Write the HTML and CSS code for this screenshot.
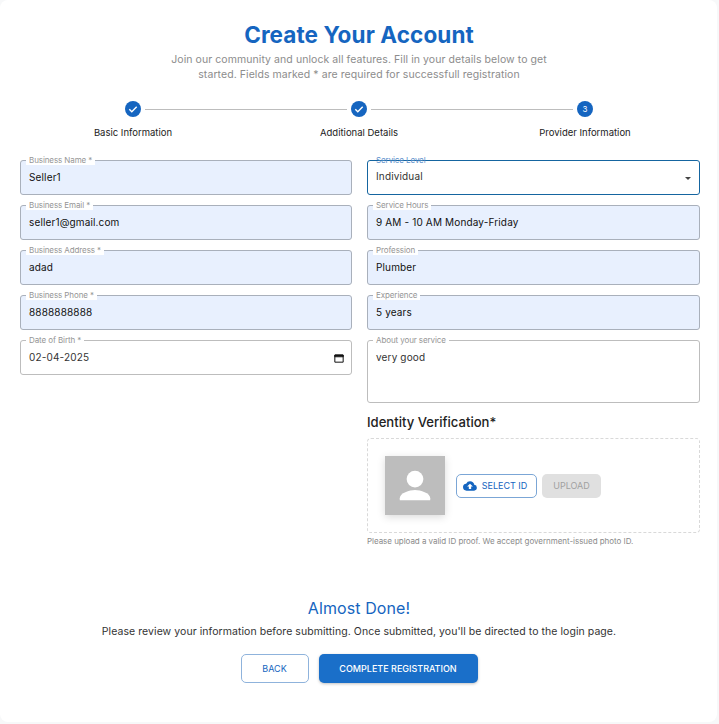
FILE: index.html
```html
<!DOCTYPE html>
<html lang="en">
<head>
    <meta charset="UTF-8">
    <meta name="viewport" content="width=device-width, initial-scale=1.0">
    <title>Create Your Account</title>
    <link rel="stylesheet" href="styles.css">
</head>
<body>
    <div class="card">
        <h1 class="title">Create Your Account</h1>
        <p class="subtitle">Join our community and unlock all features. Fill in your details below to get<br>started. Fields marked * are required for successfull registration</p>

        <div class="stepper">
            <div class="step">
                <div class="step-circle">
                    <svg viewBox="0 0 16 16" width="16" height="16"><path d="M4.3 8.2l2.5 2.5 4.9-5" fill="none" stroke="#fff" stroke-width="1.4"/></svg>
                </div>
                <div class="step-label">Basic Information</div>
            </div>
            <div class="step">
                <div class="step-circle">
                    <svg viewBox="0 0 16 16" width="16" height="16"><path d="M4.3 8.2l2.5 2.5 4.9-5" fill="none" stroke="#fff" stroke-width="1.4"/></svg>
                </div>
                <div class="step-label">Additional Details</div>
            </div>
            <div class="step">
                <div class="step-circle">3</div>
                <div class="step-label">Provider Information</div>
            </div>
        </div>

        <div class="form-grid">
            <div class="form-col">
                <div class="field filled"><span class="field-label">Business Name *</span><div class="field-value">Seller1</div></div>
                <div class="field filled"><span class="field-label">Business Email *</span><div class="field-value">seller1@gmail.com</div></div>
                <div class="field filled"><span class="field-label">Business Address *</span><div class="field-value">adad</div></div>
                <div class="field filled"><span class="field-label">Business Phone *</span><div class="field-value">8888888888</div></div>
                <div class="field"><span class="field-label">Date of Birth *</span>
                    <div class="field-value date-value">02-04-2025
                        <svg viewBox="0 0 12 12" width="10" height="10"><path d="M1 2.5h10v8.5H1z M1 2.5v2h10v-2" fill="none" stroke="#111" stroke-width="1.2"/><path d="M1 1.8h10v2.4H1z" fill="#111"/></svg>
                    </div>
                </div>
            </div>

            <div class="form-col">
                <div class="field focused"><span class="field-label">Service Level</span>
                    <div class="field-value select-value">Individual<span class="select-arrow"></span></div>
                </div>
                <div class="field filled"><span class="field-label">Service Hours</span><div class="field-value">9 AM - 10 AM Monday-Friday</div></div>
                <div class="field filled"><span class="field-label">Profession</span><div class="field-value">Plumber</div></div>
                <div class="field filled"><span class="field-label">Experience</span><div class="field-value">5 years</div></div>
                <div class="field textarea"><span class="field-label">About your service</span><div class="field-value">very good</div></div>

                <h2 class="id-title">Identity Verification*</h2>
                <div class="id-box">
                    <div class="id-photo">
                        <svg viewBox="0 0 60 60" width="60" height="59"><circle cx="30" cy="23.500" r="8.500" fill="#fff"/><path d="M14.500 45v-2c0-5.500 10-8.500 15.500-8.500s15.500 3 15.500 8.500v2z" fill="#fff"/></svg>
                    </div>
                    <div class="btn btn-select">
                        <svg viewBox="0 0 24 24" width="14" height="14"><path d="M19.350 10.040A7.490 7.490 0 0 0 12 4a7.500 7.500 0 0 0-6.650 4.040A6 6 0 0 0 6 20h13a5 5 0 0 0 .35-9.960zM14 13v4h-4v-4H7l5-5 5 5h-3z" fill="#1565c0"/></svg>
                        SELECT ID
                    </div>
                    <div class="btn btn-upload">UPLOAD</div>
                </div>
                <p class="id-hint">Please upload a valid ID proof. We accept government-issued photo ID.</p>
            </div>
        </div>

        <div class="finish">
            <h3 class="finish-title">Almost Done!</h3>
            <p class="finish-text">Please review your information before submitting. Once submitted, you'll be directed to the login page.</p>
            <div class="finish-actions">
                <div class="btn btn-back">BACK</div>
                <div class="btn btn-complete">COMPLETE REGISTRATION</div>
            </div>
        </div>
    </div>
</body>
</html>
```

FILE: styles.css
```css
/* Page */
html, body {
    margin: 0;
    padding: 0;
    background-color: #f7f8f9;
    font-family: Inter, "Open Sans", sans-serif;
    overflow: hidden;
}

.card {
    box-sizing: border-box;
    height: 722px;
    width: 717px;
    margin: 0 auto 0 0;
    padding: 22px 19px 0 20px;
    background-color: #fff;
    border-radius: 8px;
}

/* Heading */
.title {
    margin: 0;
    font-size: 22.500px;
    line-height: 25px;
    font-weight: 700;
    letter-spacing: 0.1px;
    text-align: center;
    color: #1565c0;
}

.subtitle {
    margin: 5px 0 0;
    font-size: 10.500px;
    line-height: 15px;
    letter-spacing: 0.07px;
    text-align: center;
    color: #8c8c8c;
}

/* Stepper */
.stepper {
    display: grid;
    grid-template-columns: repeat(3, 1fr);
    margin-top: 19px;
}

.step {
    position: relative;
    display: flex;
    flex-direction: column;
    align-items: center;
}

/* connector between circles */
.step + .step::before {
    content: "";
    position: absolute;
    top: 8px;
    left: calc(-50% + 12px);
    right: calc(50% + 12px);
    height: 1px;
    background-color: #bdbdbd;
}

.step-circle {
    width: 16px;
    height: 16px;
    border-radius: 50%;
    background-color: #1565c0;
    color: #fff;
    font-size: 8px;
    line-height: 16px;
    text-align: center;
}

.step-circle svg {
    display: block;
}

.step-label {
    margin-top: 9px;
    font-size: 9.500px;
    line-height: 13px;
    color: #222;
}

/* Form */
.form-grid {
    display: grid;
    grid-template-columns: 332px 333px;
    column-gap: 15px;
    margin-top: 21px;
}

.form-col {
    display: flex;
    flex-direction: column;
    gap: 10px;
}

.field {
    position: relative;
    box-sizing: border-box;
    height: 35px;
    border: 1px solid #bdbdbd;
    border-radius: 3px;
    background-color: #fff;
}

.field.filled {
    background-color: #e8f0fe;
    border-color: #a9b0bb;
}

.field.focused {
    border-color: #1565a0;
}

.field.textarea {
    height: 63px;
}

.field-label {
    position: absolute;
    top: -6px;
    left: 5px;
    padding: 0 3px;
    font-size: 8px;
    line-height: 10px;
    letter-spacing: -0.1px;
    color: #959595;
    background-color: #fff;
}

.focused .field-label {
    color: #5b8fcb;
    background-color: transparent;
}

.field-value {
    padding: 0 8px;
    font-size: 10px;
    line-height: 33px;
    letter-spacing: 0.15px;
    color: #111;
}

.date-value, .select-value {
    display: flex;
    align-items: center;
    justify-content: space-between;
    color: #333;
}

.date-value svg {
    margin-right: -1px;
}

.select-value {
    line-height: 31px;
    padding-bottom: 2px;
}

.select-arrow {
    width: 0;
    height: 0;
    margin: 3px 0 0;
    border-left: 3px solid transparent;
    border-right: 3px solid transparent;
    border-top: 3px solid #444;
}

.textarea .field-value {
    line-height: 14px;
    padding-top: 9px;
    color: #333;
}

/* Identity upload */
.id-title {
    margin: -1px 0 0;
    font-size: 13.100px;
    line-height: 20px;
    font-weight: 500;
    color: #222;
}

.id-box {
    display: flex;
    align-items: center;
    gap: 5px;
    box-sizing: border-box;
    height: 95px;
    margin-top: -4px;
    padding-left: 17px;
    border: 1px dashed #d9d9d9;
    border-radius: 4px;
}

.id-photo {
    width: 60px;
    height: 59px;
    margin-right: 6px;
    background-color: #bdbdbd;
    box-shadow: 0 2px 8px rgba(0, 0, 0, 0.15);
}

.id-photo svg {
    display: block;
}

.id-hint {
    margin: -7px 0 0;
    font-size: 8px;
    line-height: 11px;
    letter-spacing: -0.04px;
    color: #8a8a8a;
}

/* Buttons */
.btn {
    display: flex;
    align-items: center;
    justify-content: center;
    box-sizing: border-box;
    border-radius: 5px;
    font-size: 9px;
    font-weight: 400;
}

.btn-select {
    gap: 5px;
    width: 81px;
    height: 24px;
    padding-right: 3px;
    border: 1px solid #7ba6d6;
    color: #1565c0;
}

.btn-upload {
    width: 59px;
    height: 24px;
    background-color: #e0e0e0;
    color: #a0a0a0;
}

.btn-back {
    width: 68px;
    height: 29px;
    border: 1px solid #8fb3dc;
    color: #1565c0;
}

.btn-complete {
    width: 159px;
    height: 29px;
    background-color: #1a6fc9;
    color: #fff;
    font-weight: 500;
    box-shadow: 0 1px 3px rgba(0, 0, 0, 0.25);
}

/* Bottom section */
.finish {
    margin-top: 51px;
    text-align: center;
}

.finish-title {
    margin: 0;
    font-size: 16px;
    line-height: 20px;
    font-weight: 400;
    letter-spacing: 0.1px;
    color: #1565c0;
}

.finish-text {
    margin: 7px 0 0;
    font-size: 10.500px;
    line-height: 14px;
    letter-spacing: 0.06px;
    color: #333;
}

.finish-actions {
    display: flex;
    justify-content: center;
    gap: 10px;
    margin-top: 15px;
}
```
